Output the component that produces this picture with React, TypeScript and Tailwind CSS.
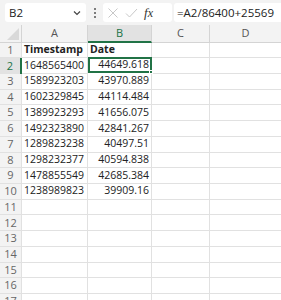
import React from "react";

const rows: [string, string][] = [
  ["Timestamp", "Date"],
  ["1648565400", "44649.618"],
  ["1589923203", "43970.889"],
  ["1602329845", "44114.484"],
  ["1389923293", "41656.075"],
  ["1492323890", "42841.267"],
  ["1289823238", "40497.51"],
  ["1298232377", "40594.838"],
  ["1478855549", "42685.384"],
  ["1238989823", "39909.16"],
];

export default function App() {
  const total = 17;
  return (
    <div
      className="w-[281px] h-[300px] overflow-hidden bg-white text-[#222]"
      style={{ fontFamily: '"Open Sans", "Noto Sans", sans-serif' }}
    >
      {/* formula bar */}
      <div className="h-[25px] bg-[#f3f3f3] flex items-center">
        <div className="ml-[5px] w-[81px] h-[19px] bg-white rounded-[3px] flex items-center justify-between px-[4px]">
          <span className="text-[11.5px] leading-none">B2</span>
          <svg width="8" height="6" viewBox="0 0 8 6" className="mr-[1px]">
            <path d="M1 1.5 L4 4.5 L7 1.5" stroke="#444" strokeWidth="1.2" fill="none" />
          </svg>
        </div>
        <div className="w-[17px] flex flex-col items-center justify-center gap-[2px]">
          <span className="w-[2px] h-[2px] bg-[#555] rounded-full" />
          <span className="w-[2px] h-[2px] bg-[#555] rounded-full" />
          <span className="w-[2px] h-[2px] bg-[#555] rounded-full" />
        </div>
        <div className="w-[69px] h-[19px] bg-white rounded-[3px] flex items-center px-[4px] gap-[6px]">
          <svg width="12" height="12" viewBox="0 0 12 12">
            <path d="M1.5 1.5 L10.5 10.5 M10.5 1.5 L1.5 10.5" stroke="#c8c8c8" strokeWidth="1" fill="none" />
          </svg>
          <svg width="13" height="12" viewBox="0 0 13 12">
            <path d="M1 6.5 L4.5 10 L12 2" stroke="#c8c8c8" strokeWidth="1" fill="none" />
          </svg>
          <span
            className="text-[13px] italic leading-none text-[#333]"
            style={{ fontFamily: '"Liberation Serif", serif' }}
          >
            f<span className="text-[12px]">x</span>
          </span>
        </div>
        <div className="ml-[2px] flex-1 h-[19px] bg-white rounded-l-[3px] flex items-center pl-[3px]">
          <span className="text-[11.5px] leading-none">=A2/86400+25569</span>
        </div>
      </div>

      {/* grid */}
      <div
        className="grid text-[10.5px]"
        style={{ gridTemplateColumns: "22px 66px 64px 58px 71px" }}
      >
        {/* header row */}
        <div className="h-[17.5px] bg-[#f3f3f3] border-r border-b border-[#d4d4d4] relative">
          <svg width="12" height="12" viewBox="0 0 12 12" className="absolute right-[2px] bottom-[2px]">
            <path d="M12 0 L12 12 L0 12 Z" fill="#d9d9d9" />
          </svg>
        </div>
        <div className="h-[17.5px] bg-[#f3f3f3] border-r border-b border-[#d4d4d4] flex items-center justify-center text-[11px] text-[#555]">A</div>
        <div className="h-[17.5px] bg-[#e2e2e2] border-r border-b-2 border-r-[#d4d4d4] border-b-[#217346] flex items-center justify-center text-[11px] text-[#217346]">B</div>
        <div className="h-[17.5px] bg-[#f3f3f3] border-r border-b border-[#d4d4d4] flex items-center justify-center text-[11px] text-[#555]">C</div>
        <div className="h-[17.5px] bg-[#f3f3f3] border-b border-[#d4d4d4] flex items-center justify-center text-[11px] text-[#555]">D</div>

        {Array.from({ length: total }).map((_, i) => {
          const r = i + 1;
          const data = rows[i];
          const selected = r === 2;
          return (
            <React.Fragment key={r}>
              <div
                className={
                  selected
                    ? "h-[15.73px] bg-[#e2e2e2] border-r-2 border-[#217346] flex items-center justify-center text-[11px] text-[#217346]"
                    : "h-[15.73px] bg-[#f3f3f3] border-r border-b border-[#e1e1e1] flex items-center justify-center text-[11px] text-[#666]"
                }
              >
                {r}
              </div>
              <div className="h-[15.73px] border-r border-b border-[#e1e1e1] flex items-center pl-[2px] whitespace-nowrap">
                {data ? (
                  <span className={r === 1 ? "font-bold" : ""}>{data[0]}</span>
                ) : null}
              </div>
              <div
                className={
                  "h-[15.73px] flex items-center whitespace-nowrap relative " +
                  (r === 1
                    ? "border-r border-b border-[#e1e1e1] pl-[2px]"
                    : selected
                    ? "border-2 border-[#217346] justify-end pr-[1px] -mt-[1px]"
                    : "border-r border-b border-[#e1e1e1] justify-end pr-[2px]")
                }
              >
                {data ? (
                  <span className={r === 1 ? "font-bold" : ""}>{data[1]}</span>
                ) : null}
                {selected ? (
                  <span className="absolute -right-[3px] -bottom-[3px] w-[4px] h-[4px] bg-[#217346] border border-white" />
                ) : null}
              </div>
              <div className="h-[15.73px] border-r border-b border-[#e1e1e1]" />
              <div className="h-[15.73px] border-b border-[#e1e1e1]" />
            </React.Fragment>
          );
        })}
      </div>
    </div>
  );
}
